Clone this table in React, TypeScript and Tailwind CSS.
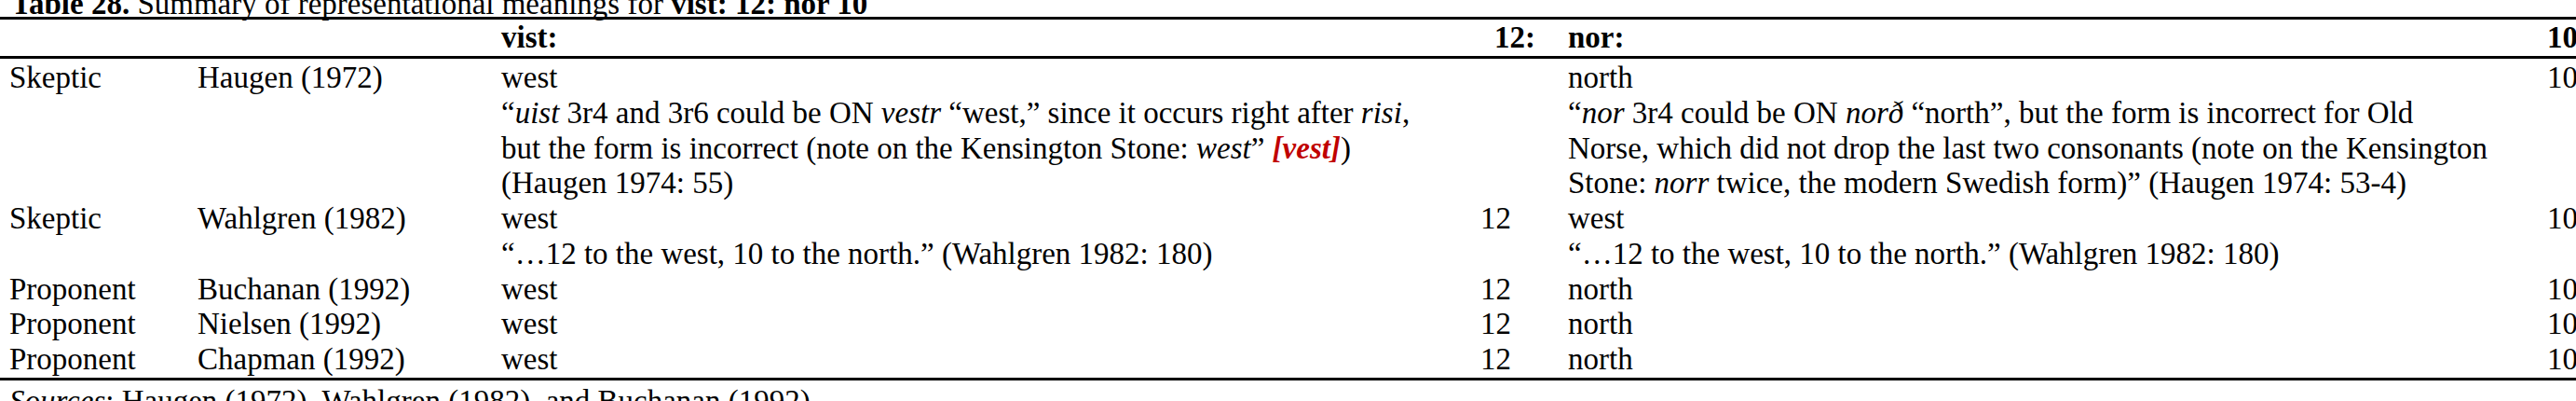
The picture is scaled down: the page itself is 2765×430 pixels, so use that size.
const cols = "grid grid-cols-[202px_326px_1022px_123px_1fr_80px] pl-[10px]";

type Row = {
  stance: string;
  source: string;
  vist: React.ReactNode;
  twelve: string;
  nor: React.ReactNode;
  ten: string;
};

const rows: Row[] = [
  {
    stance: "Skeptic",
    source: "Haugen (1972)",
    vist: (
      <>
        west
        <br />
        “<i>uist</i> 3r4 and 3r6 could be ON <i>vestr</i> “west,” since it occurs right after <i>risi</i>,
        <br />
        but the form is incorrect (note on the Kensington Stone: <i>west</i>”{" "}
        <b className="italic text-[#c00000]">[vest]</b>)
        <br />
        (Haugen 1974: 55)
      </>
    ),
    twelve: "",
    nor: (
      <>
        north
        <br />
        “<i>nor</i> 3r4 could be ON <i>norð</i> “north”, but the form is incorrect for Old
        <br />
        Norse, which did not drop the last two consonants (note on the Kensington
        <br />
        Stone: <i>norr</i> twice, the modern Swedish form)” (Haugen 1974: 53-4)
      </>
    ),
    ten: "10",
  },
  {
    stance: "Skeptic",
    source: "Wahlgren (1982)",
    vist: (
      <>
        west
        <br />
        “…12 to the west, 10 to the north.” (Wahlgren 1982: 180)
      </>
    ),
    twelve: "12",
    nor: (
      <>
        west
        <br />
        “…12 to the west, 10 to the north.” (Wahlgren 1982: 180)
      </>
    ),
    ten: "10",
  },
  { stance: "Proponent", source: "Buchanan (1992)", vist: "west", twelve: "12", nor: "north", ten: "10" },
  { stance: "Proponent", source: "Nielsen (1992)", vist: "west", twelve: "12", nor: "north", ten: "10" },
  { stance: "Proponent", source: "Chapman (1992)", vist: "west", twelve: "12", nor: "north", ten: "10" },
];

const Rule = () => <div className="h-[3px] w-full bg-black" />;

export default function App() {
  return (
    <div className="w-[2765px] h-[430px] overflow-hidden bg-white text-black">
      <div className="w-[2767px] mt-[-13px] font-['Liberation_Serif','Times_New_Roman',serif] text-[33px] leading-[37.75px] whitespace-nowrap">
        {/* Caption */}
        <div className="h-[31px] leading-[34px] pl-[12px]">
          <b>Table 28.</b> Summary of representational meanings for <b>vist: 12: nor 10</b>
        </div>
        <Rule />

        {/* Column heads */}
        <div className={`${cols} pt-[1px] h-[39px] font-bold`}>
          <div />
          <div />
          <div>vist:</div>
          <div className="text-right pr-[35px]">12:</div>
          <div>nor:</div>
          <div className="text-right">10</div>
        </div>
        <Rule />

        <div className="pt-[2px]">
          {rows.map((r, i) => (
            <div key={i} className={cols}>
              <div>{r.stance}</div>
              <div>{r.source}</div>
              <div>{r.vist}</div>
              <div className="text-right pr-[61px]">{r.twelve}</div>
              <div>{r.nor}</div>
              <div className="text-right">{r.ten}</div>
            </div>
          ))}
        </div>
        <Rule />

        <div className="pt-[4px] pl-[10px]">
          <i>Sources</i>: Haugen (1972), Wahlgren (1982), and Buchanan (1992).
        </div>
      </div>
    </div>
  );
}
